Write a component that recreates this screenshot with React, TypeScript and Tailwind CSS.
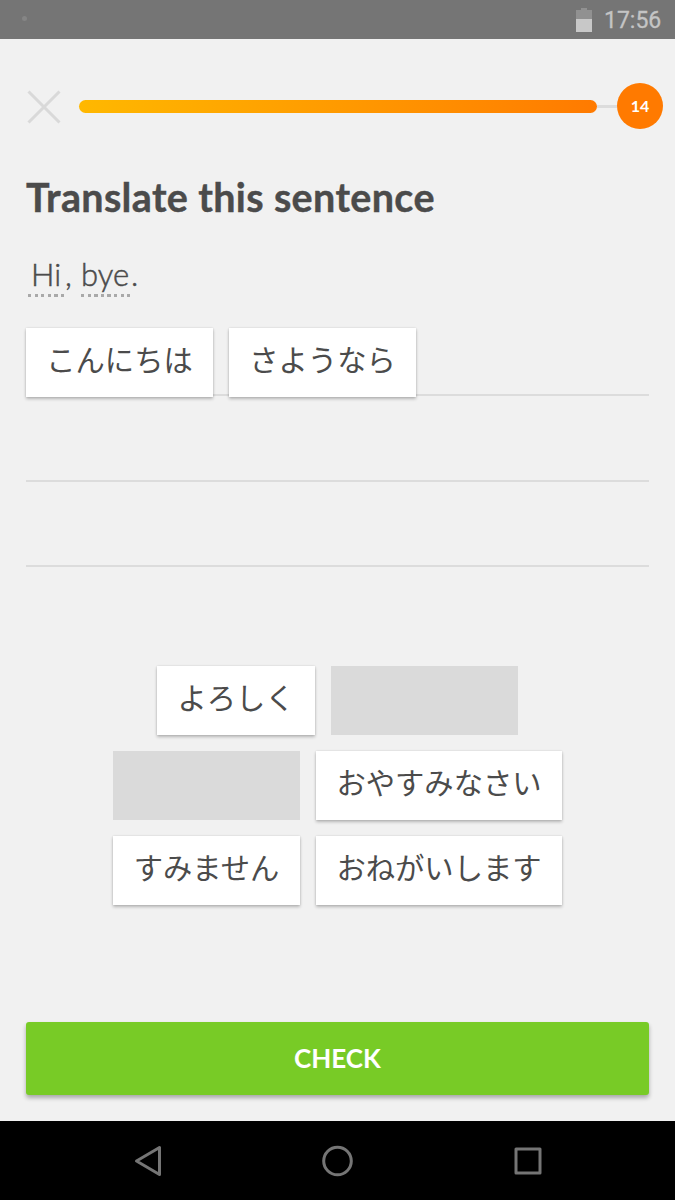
import { useState } from 'react'

type Word = { text: string; width: string }

const words: Record<string, Word> = {
  hello: { text: 'こんにちは', width: 'w-[187px]' },
  goodbye: { text: 'さようなら', width: 'w-[187px]' },
  regards: { text: 'よろしく', width: 'w-[158px]' },
  goodnight: { text: 'おやすみなさい', width: 'w-[246px]' },
  sorry: { text: 'すみません', width: 'w-[187px]' },
  please: { text: 'おねがいします', width: 'w-[246px]' },
}

const bank = [
  ['regards', 'goodbye'],
  ['hello', 'goodnight'],
  ['sorry', 'please'],
]

function Tile({ word, onClick }: { word: Word; onClick: () => void }) {
  return (
    <button
      type="button"
      onClick={onClick}
      className={`${word.width} h-[69px] shrink-0 bg-white pb-[9px] text-center font-['Noto_Sans_CJK_JP',sans-serif] text-[29.3px] leading-[60px] whitespace-nowrap text-[#4b4b4b] shadow-[0_2px_3px_rgba(0,0,0,0.24),0_0_2px_rgba(0,0,0,0.12)]`}
    >
      {word.text}
    </button>
  )
}

function Hint({ className, children }: { className: string; children: string }) {
  return (
    <span className={`${className} flex h-[40px] flex-col justify-between`}>
      <span className="leading-[34px]">{children}</span>
      <span className="h-[3px] shrink-0 bg-[repeating-linear-gradient(90deg,#a9a9a9_0_3.3px,transparent_3.3px_6.6px)]" />
    </span>
  )
}

export default function App() {
  const [answer, setAnswer] = useState(['hello', 'goodbye'])

  const add = (id: string) => setAnswer([...answer, id])
  const remove = (id: string) => setAnswer(answer.filter((a) => a !== id))

  return (
    <div className="flex h-[1200px] w-[675px] flex-col overflow-hidden bg-[#f1f1f1] font-['Lato',sans-serif] text-[#4b4b4b]">
      {/* Status bar */}
      <div className="flex h-[39px] shrink-0 items-center bg-[#757575] pr-[13px] pl-[22px]">
        <span className="mb-[2px] size-[5px] rounded-full bg-[#858585]" />
        <svg className="mt-px ml-auto" width="16" height="24" viewBox="0 0 16 24">
          <path d="M5 0h6v2h5v9H0V2h5z" fill="#919191" />
          <path d="M0 11h16v13H0z" fill="#c8c8c8" />
        </svg>
        <span className="mt-[3px] ml-[12px] w-[58px] font-['Roboto',sans-serif] text-[23px] leading-[28px] whitespace-nowrap text-[#c4c4c4] [-webkit-text-stroke:0.3px_#c4c4c4]">17:56</span>
      </div>

      {/* Progress */}
      <div className="mt-[44px] flex h-[46px] shrink-0 items-center pr-[12px] pl-[27px]">
        <button type="button" aria-label="Quit" className="mt-[2px]">
          <svg width="34" height="34" viewBox="0 0 34 34" stroke="#d9d9d9" strokeWidth="3">
            <path d="M1.5 1.5l31 31M32.5 1.5l-31 31" />
          </svg>
        </button>
        <div className="ml-[18px] h-[13px] w-[518px] rounded-full bg-linear-to-r from-[#ffb800] to-[#ff7a00]" />
        <div className="h-[3px] w-[20px] bg-[#dcdcdc]" />
        <div className="flex size-[46px] shrink-0 items-center justify-center rounded-full bg-[#ff7a00] text-[16px] font-bold text-white">14</div>
      </div>

      <h1 className="mt-[44px] ml-[26px] h-[48px] shrink-0 text-[39.5px] leading-[48px] font-bold tracking-[0.35px] whitespace-nowrap [-webkit-text-stroke:0.4px_#4b4b4b]">Translate this sentence</h1>

      <div className="mt-[36px] ml-[28px] flex h-[40px] shrink-0 text-[31px] font-light [-webkit-text-stroke:0.5px_#4b4b4b]">
        <Hint className="w-[37px] indent-[3px]">Hi</Hint>
        <span className="w-[16px] leading-[34px]">,</span>
        <Hint className="w-[50px]">bye</Hint>
        <span className="leading-[34px]">.</span>
      </div>

      {/* Answer lines */}
      <div className="mx-[26px] mt-[31px] shrink-0">
        <div className="flex h-[69px] gap-[16px] bg-[linear-gradient(#dcdcdc,#dcdcdc)] bg-[length:100%_2px] bg-[position:0_66px] bg-no-repeat">
          {answer.map((id) => (
            <Tile key={id} word={words[id]} onClick={() => remove(id)} />
          ))}
        </div>
        <div className="mt-[83px] h-[2px] bg-[#dcdcdc]" />
        <div className="mt-[83px] h-[2px] bg-[#dcdcdc]" />
      </div>

      {/* Word bank */}
      <div className="mt-[99px] flex shrink-0 flex-col items-center gap-[16px]">
        {bank.map((row) => (
          <div key={row[0]} className="flex gap-[16px]">
            {row.map((id) =>
              answer.includes(id) ? (
                <div key={id} className={`${words[id].width} h-[69px] bg-[#dadada]`} />
              ) : (
                <Tile key={id} word={words[id]} onClick={() => add(id)} />
              )
            )}
          </div>
        ))}
      </div>

      <button
        type="button"
        className="mx-[26px] mt-auto mb-[26px] h-[73px] shrink-0 rounded-[3px] bg-[#78cb26] text-[26px] font-bold text-white shadow-[0_3px_4px_rgba(0,0,0,0.3)]"
      >
        CHECK
      </button>

      {/* Navigation bar */}
      <div className="flex h-[79px] shrink-0 items-center justify-between bg-black px-[133px]">
        <svg width="30" height="32" viewBox="0 0 30 32" fill="none" stroke="#757575" strokeWidth="3" strokeLinejoin="round">
          <path d="M26.5 2.5v27L3.5 16z" />
        </svg>
        <svg className="overflow-visible" width="32" height="32" viewBox="1.5 0 32 32" fill="none" stroke="#757575" strokeWidth="3">
          <circle cx="16" cy="16" r="13.8" />
        </svg>
        <svg width="28" height="28" viewBox="0 0 28 28" fill="none" stroke="#757575" strokeWidth="3" strokeLinejoin="round">
          <path d="M2 2h24v24H2z" />
        </svg>
      </div>
    </div>
  )
}
